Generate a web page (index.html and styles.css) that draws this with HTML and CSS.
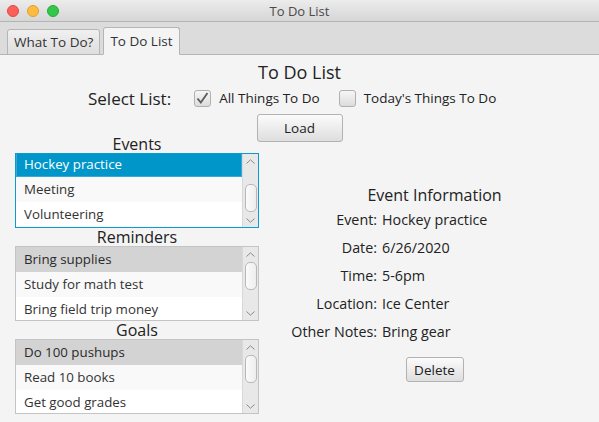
FILE: index.html
```html
<!DOCTYPE html>
<html lang="en">
<head>
  <meta charset="UTF-8" />
  <meta name="viewport" content="width=device-width, initial-scale=1.0" />
  <title>To Do List</title>
  <link rel="stylesheet" href="styles.css">
</head>
<body>
  <div class="titlebar">
    <div class="lights">
      <span class="light red"></span>
      <span class="light yellow"></span>
      <span class="light green"></span>
    </div>
    <div class="title">To Do List</div>
    <div></div>
  </div>

  <div class="tabbar">
    <div class="tab">What To Do?</div>
    <div class="tab active">To Do List</div>
  </div>

  <div class="page">
    <h1>To Do List</h1>

    <div class="select-row">
      <span class="select-label">Select List:</span>
      <span class="check">
        <span class="box">
          <svg width="13" height="12" viewBox="0 0 13 12"><polyline points="1.5,6.5 4.8,10.5 11.5,1" fill="none" stroke="#5a5a5a" stroke-width="1.8" /></svg>
        </span>
        All Things To Do
      </span>
      <span class="check second">
        <span class="box"></span>
        Today's Things To Do
      </span>
    </div>

    <div class="load-row">
      <button type="button" class="btn load">Load</button>
    </div>

    <div class="columns">
      <div class="lists">
        <div class="list-title">Events</div>
        <div class="listview focused">
          <div class="rows scrolled">
            <div class="row selected">Hockey practice</div>
            <div class="row">Meeting</div>
            <div class="row">Volunteering</div>
          </div>
          <div class="scrollbar">
            <svg class="arrow" width="9" height="5" viewBox="0 0 9 5"><polyline points="0.5,4.5 4.5,0.8 8.5,4.5" fill="none" stroke="#8a8a8a" stroke-width="1" /></svg>
            <div class="track"><div class="thumb low"></div></div>
            <svg class="arrow" width="9" height="5" viewBox="0 0 9 5"><polyline points="0.5,0.5 4.5,4.2 8.5,0.5" fill="none" stroke="#8a8a8a" stroke-width="1" /></svg>
          </div>
        </div>

        <div class="list-title">Reminders</div>
        <div class="listview">
          <div class="rows">
            <div class="row picked">Bring supplies</div>
            <div class="row">Study for math test</div>
            <div class="row">Bring field trip money</div>
          </div>
          <div class="scrollbar">
            <svg class="arrow" width="9" height="5" viewBox="0 0 9 5"><polyline points="0.5,4.5 4.5,0.8 8.5,4.5" fill="none" stroke="#8a8a8a" stroke-width="1" /></svg>
            <div class="track"><div class="thumb"></div></div>
            <svg class="arrow" width="9" height="5" viewBox="0 0 9 5"><polyline points="0.5,0.5 4.5,4.2 8.5,0.5" fill="none" stroke="#8a8a8a" stroke-width="1" /></svg>
          </div>
        </div>

        <div class="list-title">Goals</div>
        <div class="listview">
          <div class="rows">
            <div class="row picked">Do 100 pushups</div>
            <div class="row">Read 10 books</div>
            <div class="row">Get good grades</div>
          </div>
          <div class="scrollbar">
            <svg class="arrow" width="9" height="5" viewBox="0 0 9 5"><polyline points="0.5,4.5 4.5,0.8 8.5,4.5" fill="none" stroke="#8a8a8a" stroke-width="1" /></svg>
            <div class="track"><div class="thumb"></div></div>
            <svg class="arrow" width="9" height="5" viewBox="0 0 9 5"><polyline points="0.5,0.5 4.5,4.2 8.5,0.5" fill="none" stroke="#8a8a8a" stroke-width="1" /></svg>
          </div>
        </div>
      </div>

      <div class="info">
        <h2>Event Information</h2>
        <div class="info-grid">
          <span class="key">Event:</span><span class="val">Hockey practice</span>
          <span class="key">Date:</span><span class="val">6/26/2020</span>
          <span class="key">Time:</span><span class="val">5-6pm</span>
          <span class="key">Location:</span><span class="val">Ice Center</span>
          <span class="key">Other Notes:</span><span class="val">Bring gear</span>
        </div>
        <div class="delete-row">
          <button type="button" class="btn delete">Delete</button>
        </div>
      </div>
    </div>
  </div>
</body>
</html>
```

FILE: styles.css
```css
html, body {
  margin: 0;
  padding: 0;
}
body {
  width: 599px;
  height: 422px;
  overflow: hidden;
  background: #f4f4f4;
  font-family: 'Open Sans', sans-serif;
  font-size: 13.3px;
  color: #333;
}

/* window chrome */
.titlebar {
  height: 21px;
  display: grid;
  grid-template-columns: 1fr auto 1fr;
  align-items: center;
  background: linear-gradient(#ececec, #d6d6d6);
  border-bottom: 1px solid #b4b4b4;
}
.lights {
  display: flex;
  gap: 8px;
  padding-left: 7px;
}
.light {
  width: 12px;
  height: 12px;
  border-radius: 50%;
  box-sizing: border-box;
}
.red { background: #fc605b; border: 1px solid #de4a45; }
.yellow { background: #fdbc40; border: 1px solid #dea032; }
.green { background: #34c84a; border: 1px solid #27aa36; }
.title {
  font-size: 13px;
  color: #4a4a4a;
}

.tabbar {
  height: 32px;
  background: #dcdcdc;
  border-bottom: 1px solid #b5b5b5;
  display: flex;
  align-items: flex-end;
  padding-left: 7px;
  gap: 3px;
}
.tab {
  height: 24px;
  line-height: 24px;
  padding: 0 6px;
  font-size: 13.5px;
  color: #333;
  background: linear-gradient(#f0f0f0, #dedede);
  border: 1px solid #b5b5b5;
  border-radius: 3px 3px 0 0;
  margin-bottom: -1px;
}
.tab.active {
  height: 26px;
  line-height: 26px;
  background: #f4f4f4;
  border-bottom-color: #f4f4f4;
}

/* page */
.page {
  padding-top: 6px;
}
h1 {
  margin: 0;
  font-size: 18px;
  font-weight: normal;
  line-height: 22px;
  text-align: center;
  color: #222;
}
.select-row {
  display: flex;
  align-items: center;
  height: 18px;
  margin-top: 6px;
  padding-left: 88px;
  color: #222;
}
.select-label {
  font-size: 17px;
  margin-right: 23px;
}
.check {
  display: flex;
  align-items: center;
  gap: 8px;
  font-size: 13.5px;
}
.check.second {
  margin-left: 19px;
}
.box {
  width: 17px;
  height: 17px;
  box-sizing: border-box;
  border: 1px solid #b0b0b0;
  border-radius: 3px;
  background: linear-gradient(#f6f6f6, #dcdcdc);
  display: flex;
  align-items: center;
  justify-content: center;
}

.load-row {
  display: flex;
  justify-content: center;
  margin-top: 7px;
}
.btn {
  font-family: 'Open Sans', sans-serif;
  font-size: 13.5px;
  color: #222;
  background: linear-gradient(#fbfbfb, #dedede);
  border: 1px solid #b2b2b2;
  border-radius: 3px;
  padding: 0;
}
.load {
  width: 86px;
  height: 28px;
}

.columns {
  display: flex;
  margin-top: -7px;
}
.lists {
  width: 244px;
  padding-left: 15px;
  margin-right: 11px;
}
.list-title {
  height: 18px;
  line-height: 18px;
  text-align: center;
  font-size: 16px;
  color: #222;
}
.listview {
  height: 75px;
  box-sizing: border-box;
  border: 1px solid #c4c4c4;
  display: flex;
  background: #fff;
  overflow: hidden;
}
.listview.focused {
  border-color: #0a9bd0;
}
.rows {
  flex: 1;
}
.rows.scrolled {
  margin-top: -2px;
}
.row {
  height: 25px;
  line-height: 24px;
  padding-left: 8px;
  white-space: nowrap;
}
.row:nth-child(2) {
  background: #f9f9f9;
}
.row.selected {
  background: #0096c9;
  color: #fff;
  box-shadow: inset 0 0 0 1px #39a9d6;
}
.row.picked {
  background: #d3d3d3;
  color: #2a2a2a;
}

.scrollbar {
  width: 15px;
  border-left: 1px solid #d8d8d8;
  background: #e8e8e8;
  display: flex;
  flex-direction: column;
  align-items: center;
}
.arrow {
  margin: 5px 0 4px;
  flex: none;
}
.track {
  flex: 1;
  width: 100%;
  display: flex;
  justify-content: center;
}
.thumb {
  width: 12px;
  height: 28px;
  margin-top: 1px;
  box-sizing: border-box;
  border: 1px solid #b8b8b8;
  border-radius: 5px;
  background: linear-gradient(to right, #fbfbfb, #ededed);
}
.thumb.low {
  margin-top: 16px;
}

/* details */
.info {
  flex: 1;
  padding-top: 50px;
}
h2 {
  margin: 0;
  font-size: 16px;
  font-weight: normal;
  line-height: 20px;
  text-align: center;
  color: #222;
}
.info-grid {
  display: grid;
  grid-template-columns: 107px auto;
  column-gap: 5px;
  grid-auto-rows: 28px;
  align-items: center;
  font-size: 14.3px;
  color: #222;
}
.key {
  text-align: right;
}
.delete-row {
  display: flex;
  justify-content: center;
  margin-top: 12px;
}
.delete {
  width: 58px;
  height: 25px;
}
```
